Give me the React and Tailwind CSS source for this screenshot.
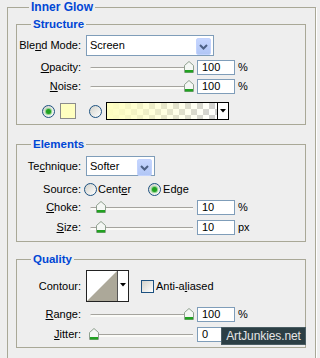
import React from 'react';

const Radio = ({ checked }) => (
  <span className="relative flex h-[13px] w-[13px] shrink-0 items-center justify-center rounded-full border border-[#1c5180] bg-gradient-to-br from-[#d2d2cb] to-white">
    {checked && <span className="h-[5px] w-[5px] rounded-full bg-[#21a121] shadow-[0_0_1px_1px_#7fcf7f]" />}
  </span>
);

const Chevron = () => (
  <span className="mt-[2px] mr-[2px] flex h-[17px] w-[15px] items-center justify-center rounded-[2px] border border-[#c3d3fd] bg-gradient-to-b from-[#c6d6ff] to-[#b1c6f5]">
    <svg width="9" height="6" viewBox="0 0 9 6">
      <path d="M1 1 L4.5 4.5 L8 1" fill="none" stroke="#4d6185" strokeWidth="2" />
    </svg>
  </span>
);

const Select = ({ value, width }) => (
  <div className={`flex h-full items-start justify-between border border-[#7f9db9] bg-white ${width}`}>
    <span className="pl-[3px] leading-[19px]">{value}</span>
    <Chevron />
  </div>
);

const Thumb = () => (
  <svg width="10" height="12" viewBox="0 0 10 12">
    <path d="M0.5 4.5 L5 0.5 L9.5 4.5 V11.5 H0.5 Z" fill="#f4f7f4" stroke="#8fa08f" />
    <rect x="1" y="9" width="8" height="2.5" fill="#21a121" />
  </svg>
);

const Slider = ({ pos }) => (
  <div className="relative ml-[8px] h-[15px] w-[104px]">
    <div className="absolute left-[1px] right-[0px] top-[7px] h-[3px] rounded-l-full border-t border-[#a5a49e] bg-[#fbfbf8]" />
    <div className={`absolute top-[1px] ${pos}`}>
      <Thumb />
    </div>
  </div>
);

const NumBox = ({ value }) => (
  <div className="ml-[4px] h-full w-[38px] border border-[#7f9db9] bg-white pl-[4px] leading-[13px]">{value}</div>
);

const Label = ({ children }) => <span className="w-[64px] shrink-0 text-right">{children}</span>;

const SliderRow = ({ label, pos, value, unit, className }) => (
  <div className={`flex h-[15px] items-center ${className}`}>
    <Label>{label}</Label>
    <Slider pos={pos} />
    <NumBox value={value} />
    <span className="ml-[3px]">{unit}</span>
  </div>
);

const Group = ({ title, className, children }) => (
  <fieldset className={`border border-[#a9a897] ${className}`}>
    <legend className="ml-[14px] px-[2px] text-[11.5px] font-bold leading-[14px] text-[#0046d5]">{title}</legend>
    {children}
  </fieldset>
);

export default function App() {
  return (
    <div className="relative h-[358px] overflow-hidden bg-[#eeeeee] font-['Liberation_Sans',Arial,sans-serif] text-[11px] text-black">
      <fieldset className="ml-[7px] mr-[4px] border border-[#a9a897] pl-[8px] pr-[9px] pb-[14px] shadow-[1px_1px_0_#fff]">
        <legend className="ml-[13px] px-[2px] text-[12px] font-bold leading-[14px] text-[#0046d5]">Inner Glow</legend>

        <Group title="Structure" className="mt-[3px]">
          <div className="pt-[4px] pb-[4px]">
            <div className="flex h-[21px] items-center">
              <Label>
                Ble<u>n</u>d Mode:
              </Label>
              <div className="ml-[5px] h-full">
                <Select value="Screen" width="w-[128px]" />
              </div>
            </div>
            <SliderRow className="mt-[4px]" label={<><u>O</u>pacity:</>} pos="left-[95px]" value="100" unit="%" />
            <SliderRow className="mt-[4px]" label={<><u>N</u>oise:</>} pos="left-[95px]" value="100" unit="%" />
            <div className="mt-[8px] flex h-[18px] items-center pl-[25px]">
              <Radio checked />
              <span className="ml-[5px] h-[16px] w-[16px] border border-[#8c8c8c] bg-[#ffffc0]" />
              <span className="ml-[13px]">
                <Radio />
              </span>
              <div className="ml-[4px] flex h-[18px] w-[123px] border border-black">
                <div className="flex-1 bg-[linear-gradient(to_right,#ffffc0,rgba(255,255,192,0)),repeating-conic-gradient(#d0d0d0_0_25%,#ffffff_0_50%)] bg-[length:100%_100%,12px_12px]" />
                <div className="flex w-[11px] items-center justify-center border-l border-black bg-white">
                  <svg width="6" height="4" viewBox="0 0 6 4">
                    <path d="M0 0 H6 L3 3.5 Z" fill="#000" />
                  </svg>
                </div>
              </div>
            </div>
          </div>
        </Group>

        <Group title="Elements" className="mt-[12px]">
          <div className="pt-[5px] pb-[6px]">
            <div className="flex h-[20px] items-center">
              <Label>
                Te<u>c</u>hnique:
              </Label>
              <div className="ml-[5px] h-full">
                <Select value="Softer" width="w-[69px]" />
              </div>
            </div>
            <div className="mt-[5px] flex h-[16px] items-center">
              <Label>Source:</Label>
              <span className="ml-[3px]">
                <Radio />
              </span>
              <span className="ml-[1px]">
                Cent<u>e</u>r
              </span>
              <span className="ml-[17px]">
                <Radio checked />
              </span>
              <span className="ml-[2px]">
                Ed<u>g</u>e
              </span>
            </div>
            <SliderRow className="mt-[3px]" label={<><u>C</u>hoke:</>} pos="left-[7px]" value="10" unit="%" />
            <SliderRow className="mt-[5px]" label={<><u>S</u>ize:</>} pos="left-[7px]" value="10" unit="px" />
          </div>
        </Group>

        <Group title="Quality" className="mt-[10px]">
          <div className="pt-[4px] pb-[5px]">
            <div className="flex h-[32px] items-center">
              <Label>Contour:</Label>
              <svg className="ml-[5px]" width="43" height="32" viewBox="0 0 43 32">
                <rect x="0.5" y="0.5" width="42" height="31" fill="#fff" stroke="#222" />
                <polygon points="1,31 31,1 31,31" fill="#aca899" />
                <line x1="31.5" y1="1" x2="31.5" y2="31" stroke="#555" />
                <path d="M34 13 H40 L37 16.5 Z" fill="#000" />
              </svg>
              <span className="ml-[12px] h-[13px] w-[13px] border border-[#1c5180] bg-gradient-to-br from-[#d2d2cb] to-white" />
              <span className="ml-[2px]">
                Anti-a<u>l</u>iased
              </span>
            </div>
            <SliderRow className="mt-[5px]" label={<><u>R</u>ange:</>} pos="left-[95px]" value="100" unit="%" />
            <SliderRow className="mt-[5px]" label={<><u>J</u>itter:</>} pos="left-[0px]" value="0" unit="%" />
          </div>
        </Group>
      </fieldset>

      <div className="absolute left-[221px] top-[327px] flex h-[18px] w-[85px] items-center justify-center border border-[#4a5d63] bg-[#2c3f45] text-[12px] tracking-[-0.1px] text-[#e6e6e6]">
        ArtJunkies.net
      </div>
    </div>
  );
}
